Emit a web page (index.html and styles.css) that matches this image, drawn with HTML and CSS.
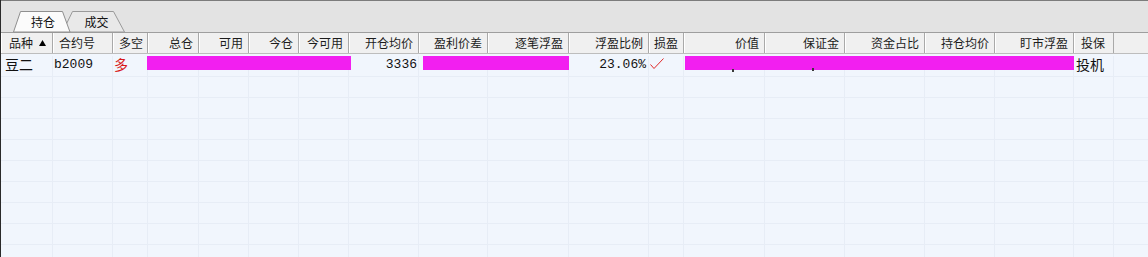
FILE: index.html
```html
<!DOCTYPE html>
<html lang="zh-CN">
<head>
<meta charset="utf-8">
<title>持仓</title>
<link rel="stylesheet" href="styles.css">
</head>
<body>
<div class="panel">
  <div class="tabbar">
    <div class="tab tab-active">
      <svg class="tab-bg" width="57" height="21" viewBox="0 0 57 21"><polygon points="0.5,21 7.5,0.5 49.5,0.5 57,21" class="tab-shape-active"/></svg>
      <span class="tab-label">持仓</span>
    </div>
    <div class="tab tab-second">
      <svg class="tab-bg" width="63" height="21" viewBox="0 0 63 21"><polygon points="0.5,21 10.5,0.5 51.5,0.5 62.5,21" class="tab-shape"/></svg>
      <span class="tab-label">成交</span>
    </div>
  </div>

  <div class="head cols">
    <div class="hc pl8">品种<svg class="sort" width="7" height="6" viewBox="0 0 7 6"><polygon points="0,6 3.5,0 7,6"/></svg></div>
    <div class="hc pl6">合约号</div>
    <div class="hc pl6">多空</div>
    <div class="hc r">总仓</div>
    <div class="hc r">可用</div>
    <div class="hc r">今仓</div>
    <div class="hc r">今可用</div>
    <div class="hc r">开仓均价</div>
    <div class="hc r">盈利价差</div>
    <div class="hc r">逐笔浮盈</div>
    <div class="hc r">浮盈比例</div>
    <div class="hc pl5">损盈</div>
    <div class="hc r">价值</div>
    <div class="hc r">保证金</div>
    <div class="hc r">资金占比</div>
    <div class="hc r">持仓均价</div>
    <div class="hc r">盯市浮盈</div>
    <div class="hc pl7">投保</div>
    <div class="hc filler"></div>
  </div>

  <div class="body">
    <div class="row cols first">
      <div class="dc pl4"><span class="cjk">豆二</span></div>
      <div class="dc pl1 num">b2009</div>
      <div class="dc pl1"><span class="cjk red">多</span></div>
      <div class="dc"></div>
      <div class="dc"></div>
      <div class="dc"></div>
      <div class="dc"></div>
      <div class="dc r pr1 num">3336</div>
      <div class="dc"></div>
      <div class="dc"></div>
      <div class="dc r pr2 num">23.06%</div>
      <div class="dc pl1"><svg class="check" width="14" height="12" viewBox="0 0 14 12"><polyline points="0.5,6.5 4,10.5 13.5,0.5"/></svg></div>
      <div class="dc"></div>
      <div class="dc"></div>
      <div class="dc"></div>
      <div class="dc"></div>
      <div class="dc"></div>
      <div class="dc pl2"><span class="cjk">投机</span></div>
      <div class="dc filler"></div>
      <div class="mask mask1"></div>
      <div class="mask mask2"></div>
      <div class="mask mask3"></div>
      <div class="speck speck1"></div>
      <div class="speck speck2"></div>
    </div>
    <div class="row cols"><div class="dc"></div><div class="dc"></div><div class="dc"></div><div class="dc"></div><div class="dc"></div><div class="dc"></div><div class="dc"></div><div class="dc"></div><div class="dc"></div><div class="dc"></div><div class="dc"></div><div class="dc"></div><div class="dc"></div><div class="dc"></div><div class="dc"></div><div class="dc"></div><div class="dc"></div><div class="dc"></div><div class="dc filler"></div></div>
    <div class="row cols"><div class="dc"></div><div class="dc"></div><div class="dc"></div><div class="dc"></div><div class="dc"></div><div class="dc"></div><div class="dc"></div><div class="dc"></div><div class="dc"></div><div class="dc"></div><div class="dc"></div><div class="dc"></div><div class="dc"></div><div class="dc"></div><div class="dc"></div><div class="dc"></div><div class="dc"></div><div class="dc"></div><div class="dc filler"></div></div>
    <div class="row cols"><div class="dc"></div><div class="dc"></div><div class="dc"></div><div class="dc"></div><div class="dc"></div><div class="dc"></div><div class="dc"></div><div class="dc"></div><div class="dc"></div><div class="dc"></div><div class="dc"></div><div class="dc"></div><div class="dc"></div><div class="dc"></div><div class="dc"></div><div class="dc"></div><div class="dc"></div><div class="dc"></div><div class="dc filler"></div></div>
    <div class="row cols"><div class="dc"></div><div class="dc"></div><div class="dc"></div><div class="dc"></div><div class="dc"></div><div class="dc"></div><div class="dc"></div><div class="dc"></div><div class="dc"></div><div class="dc"></div><div class="dc"></div><div class="dc"></div><div class="dc"></div><div class="dc"></div><div class="dc"></div><div class="dc"></div><div class="dc"></div><div class="dc"></div><div class="dc filler"></div></div>
    <div class="row cols"><div class="dc"></div><div class="dc"></div><div class="dc"></div><div class="dc"></div><div class="dc"></div><div class="dc"></div><div class="dc"></div><div class="dc"></div><div class="dc"></div><div class="dc"></div><div class="dc"></div><div class="dc"></div><div class="dc"></div><div class="dc"></div><div class="dc"></div><div class="dc"></div><div class="dc"></div><div class="dc"></div><div class="dc filler"></div></div>
    <div class="row cols"><div class="dc"></div><div class="dc"></div><div class="dc"></div><div class="dc"></div><div class="dc"></div><div class="dc"></div><div class="dc"></div><div class="dc"></div><div class="dc"></div><div class="dc"></div><div class="dc"></div><div class="dc"></div><div class="dc"></div><div class="dc"></div><div class="dc"></div><div class="dc"></div><div class="dc"></div><div class="dc"></div><div class="dc filler"></div></div>
    <div class="row cols"><div class="dc"></div><div class="dc"></div><div class="dc"></div><div class="dc"></div><div class="dc"></div><div class="dc"></div><div class="dc"></div><div class="dc"></div><div class="dc"></div><div class="dc"></div><div class="dc"></div><div class="dc"></div><div class="dc"></div><div class="dc"></div><div class="dc"></div><div class="dc"></div><div class="dc"></div><div class="dc"></div><div class="dc filler"></div></div>
    <div class="row cols"><div class="dc"></div><div class="dc"></div><div class="dc"></div><div class="dc"></div><div class="dc"></div><div class="dc"></div><div class="dc"></div><div class="dc"></div><div class="dc"></div><div class="dc"></div><div class="dc"></div><div class="dc"></div><div class="dc"></div><div class="dc"></div><div class="dc"></div><div class="dc"></div><div class="dc"></div><div class="dc"></div><div class="dc filler"></div></div>
    <div class="row cols"><div class="dc"></div><div class="dc"></div><div class="dc"></div><div class="dc"></div><div class="dc"></div><div class="dc"></div><div class="dc"></div><div class="dc"></div><div class="dc"></div><div class="dc"></div><div class="dc"></div><div class="dc"></div><div class="dc"></div><div class="dc"></div><div class="dc"></div><div class="dc"></div><div class="dc"></div><div class="dc"></div><div class="dc filler"></div></div>
  </div>
</div>
</body>
</html>
```

FILE: styles.css
```css
html, body {
  margin: 0;
  padding: 0;
  overflow: hidden;
}
body {
  width: 1148px;
  height: 257px;
  background: #f1f6fd;
  font-family: "Noto Sans CJK SC", "DejaVu Sans", sans-serif;
  font-size: 12px;
  color: #111;
}
.panel {
  height: 257px;
  border-left: 1px solid #2a2a2a;
  background: #f1f6fd;
  overflow: hidden;
}

/* tabs */
.tabbar {
  box-sizing: border-box;
  height: 32px;
  border-top: 1px solid #7c7c7c;
  background: #e3e3e3;
  display: flex;
  align-items: flex-end;
  padding-left: 12px;
}
.tab {
  position: relative;
  box-sizing: border-box;
  height: 21px;
  display: flex;
  align-items: center;
  justify-content: center;
}
.tab-active {
  width: 57px;
  padding-left: 3px;
  z-index: 2;
}
.tab-second {
  width: 63px;
  margin-left: -8px;
  padding-left: 6px;
  z-index: 1;
}
.tab-bg {
  position: absolute;
  left: 0;
  top: 0;
  overflow: visible;
}
.tab-shape-active {
  fill: #fbfbfb;
  stroke: #8f8f8f;
  stroke-width: 1;
}
.tab-shape {
  fill: #e9e9e9;
  stroke: #9a9a9a;
  stroke-width: 1;
}
.tab-label {
  position: relative;
  font-size: 12px;
  line-height: 14px;
  color: #111;
}

/* column grid */
.cols {
  display: grid;
  grid-template-columns: 52px 60px 35px 51px 50px 50px 50px 70px 69px 81px 80px 35px 81px 80px 80px 70px 79px 40px 1fr;
}

/* header */
.head {
  box-sizing: border-box;
  height: 22px;
  border-top: 1px solid #9e9e9e;
  border-bottom: 1px solid #bdbdbd;
  background: #f0f0f0;
}
.hc {
  box-sizing: border-box;
  height: 20px;
  border-right: 1px solid #a9a9a9;
  box-shadow: inset 1px 0 0 #ffffff;
  display: flex;
  align-items: center;
  white-space: nowrap;
  font-size: 12px;
  line-height: 14px;
  color: #1c1c1c;
  padding-right: 5px;
}
.hc.r { justify-content: flex-end; }
.hc.filler { border-right: none; box-shadow: none; }
.pl8 { padding-left: 8px; }
.pl7 { padding-left: 7px; }
.pl6 { padding-left: 6px; }
.pl5 { padding-left: 5px; }
.pl4 { padding-left: 4px; }
.pl2 { padding-left: 2px; }
.pl1 { padding-left: 1px; }
.sort {
  margin-left: 6px;
  fill: #000;
}

/* body */
.body {
  padding-top: 2px;
}
.row {
  position: relative;
  box-sizing: border-box;
  height: 21px;
  border-bottom: 1px solid #e7edf6;
}
.dc {
  box-sizing: border-box;
  height: 20px;
  border-right: 1px solid #e7edf6;
  display: flex;
  align-items: flex-start;
  white-space: nowrap;
  line-height: 17px;
  font-size: 13px;
  color: #111;
}
.dc.r { justify-content: flex-end; }
.dc.pr1 { padding-right: 1px; }
.dc.pr2 { padding-right: 2px; }
.dc.filler { border-right: none; }
.num {
  font-family: "Liberation Mono", "DejaVu Sans Mono", monospace;
  font-size: 13px;
}
.cjk {
  font-family: "Noto Sans CJK SC", sans-serif;
  font-size: 14px;
  line-height: 17px;
}
.red { color: #d81818; }
.check {
  margin-top: 2px;
  fill: none;
  stroke: #e02828;
  stroke-width: 1;
}

/* redaction masks over the row */
.mask {
  position: absolute;
  top: 0;
  height: 14px;
  background: #f21ff0;
}
.mask1 { left: 146px; width: 204px; }
.mask2 { left: 422px; width: 146px; }
.mask3 { left: 684px; width: 389px; }
.speck {
  position: absolute;
  width: 2px;
  height: 3px;
  background: #3a3a3a;
}
.speck1 { left: 731px; top: 13px; }
.speck2 { left: 811px; top: 12px; }
```
